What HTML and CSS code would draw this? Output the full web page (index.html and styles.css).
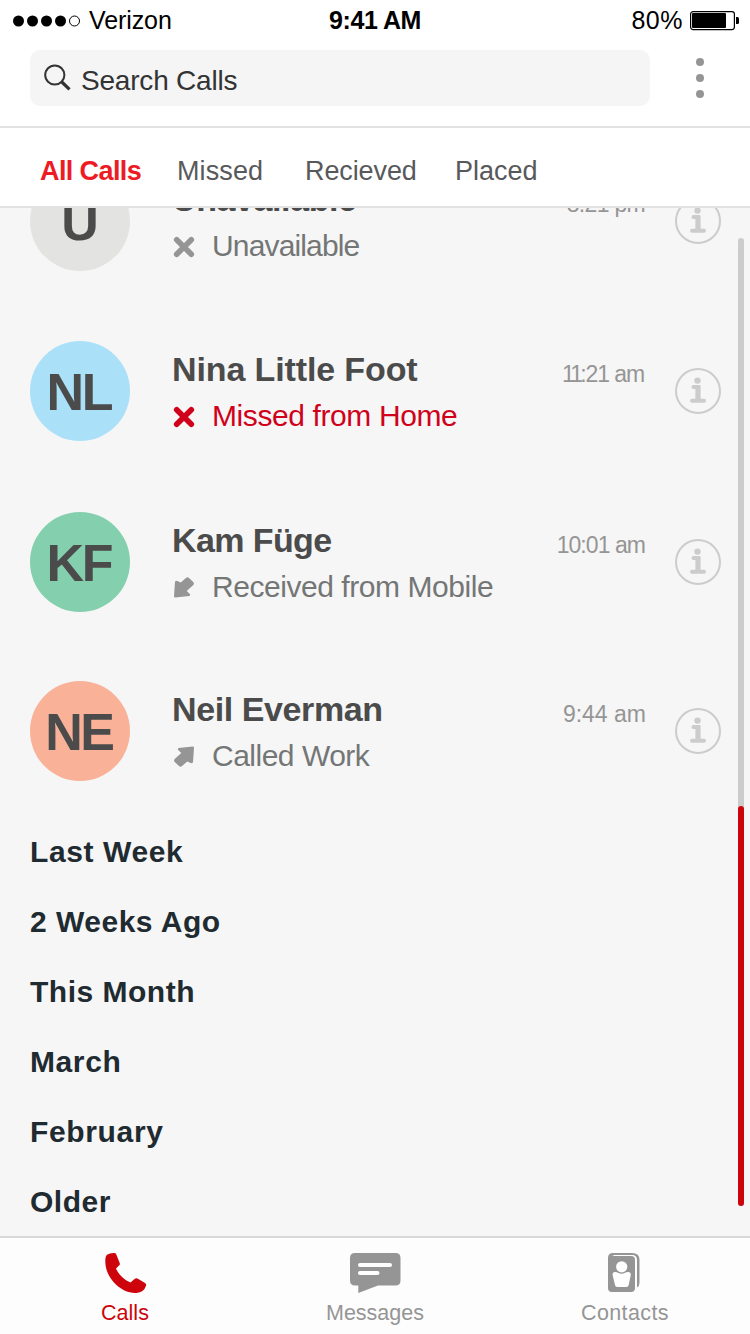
FILE: index.html
```html
<!DOCTYPE html>
<html lang="en">
<head>
<meta charset="utf-8">
<title>Calls</title>
<link rel="stylesheet" href="styles.css">
</head>
<body>
<svg class="defs" aria-hidden="true">
  <symbol id="info" viewBox="0 0 46 46"><circle cx="23" cy="23" r="22" fill="none" stroke="#ccc" stroke-width="2"/><circle cx="22.500" cy="12.600" r="3.200" fill="#ccc"/><path d="M18.500 18.900H23V32" fill="none" stroke="#ccc" stroke-width="4" stroke-linecap="round"/><path d="M23 17.500V32" stroke="#ccc" stroke-width="5.200"/><path d="M17 32.700H29" stroke="#ccc" stroke-width="4" stroke-linecap="round"/></symbol>
  <symbol id="cross" viewBox="0 0 22 22"><path d="M3.700 3.700l14.600 14.600M18.300 3.700l-14.600 14.600" fill="none" stroke="currentColor" stroke-width="5.600" stroke-linecap="round"/></symbol>
  <symbol id="arrow" viewBox="0 0 22 22"><path d="M2 4.800Q2.500 3.500 4.300 4L7.800 5.600L13.200 .700Q14.600 -.300 16 .900L20 4.800Q21.700 6.400 20.300 8L13.700 14L17 17.300Q17.500 18.500 16.300 19L2.200 20.500Q1 20.500 1 19.200Z" fill="currentColor"/></symbol>
</svg>
<div class="screen">
  <div class="status">
    <div class="carrier">
      <svg width="68" height="12" viewBox="0 0 68 12"><circle cx="5.500" cy="6" r="5.500"/><circle cx="19.500" cy="6" r="5.500"/><circle cx="33.500" cy="6" r="5.500"/><circle cx="47.500" cy="6" r="5.500"/><circle cx="61.500" cy="6" r="5" fill="#fff" stroke="#000"/></svg>
      <span class="carrier-name">Verizon</span>
    </div>
    <div class="clock">9:41 AM</div>
    <div class="battery">
      <span class="percent">80%</span>
      <svg width="50" height="20" viewBox="0 0 50 20"><rect x=".6" y=".6" width="43.800" height="18" rx="2.500" fill="#fff" stroke="#000" stroke-width="1.200"/><rect x="2" y="2" width="34" height="15" rx="1"/><path d="M46 6h1.500q1.500 0 1.500 1.500v4q0 1.500-1.500 1.500H46z"/></svg>
    </div>
  </div>
  <div class="search-row">
    <div class="search">
      <svg width="28" height="28" viewBox="0 0 28 28"><circle cx="10.800" cy="11" r="9.600" fill="none" stroke="#333" stroke-width="2"/><path d="M17.300 17.500l8.200 7.900" stroke="#333" stroke-width="3.200"/></svg>
      <span>Search Calls</span>
    </div>
    <svg class="more" width="8" height="40" viewBox="0 0 8 40"><g fill="#959595"><circle cx="4" cy="4" r="4"/><circle cx="4" cy="20" r="4"/><circle cx="4" cy="36" r="4"/></g></svg>
  </div>
  <nav class="filters">
    <span class="filter all">All Calls</span><span class="filter missed-tab">Missed</span><span class="filter received-tab">Recieved</span><span class="filter placed-tab">Placed</span>
  </nav>
  <main class="content">
    <div class="calls">
      <div class="call unavailable">
        <div class="avatar grey">U</div>
        <div class="details"><div class="name">Unavailable</div><div class="kind"><svg class="mark"><use href="#cross"/></svg><span>Unavailable</span></div></div>
        <time>8:21 pm</time><svg class="info"><use href="#info"/></svg>
      </div>
      <div class="call nina">
        <div class="avatar blue">NL</div>
        <div class="details"><div class="name">Nina Little Foot</div><div class="kind alert"><svg class="mark"><use href="#cross"/></svg><span>Missed from Home</span></div></div>
        <time><span class="ones">11</span>:21 am</time><svg class="info"><use href="#info"/></svg>
      </div>
      <div class="call kam">
        <div class="avatar green">KF</div>
        <div class="details"><div class="name">Kam Füge</div><div class="kind"><svg class="mark"><use href="#arrow"/></svg><span>Received from Mobile</span></div></div>
        <time>10:01 am</time><svg class="info"><use href="#info"/></svg>
      </div>
      <div class="call neil">
        <div class="avatar orange">NE</div>
        <div class="details"><div class="name">Neil Everman</div><div class="kind"><svg class="mark out"><use href="#arrow"/></svg><span>Called Work</span></div></div>
        <time>9:44 am</time><svg class="info"><use href="#info"/></svg>
      </div>
    </div>
    <div class="periods">
      <div class="last-week">Last Week</div><div class="weeks-ago">2 Weeks Ago</div><div class="this-month">This Month</div><div class="march">March</div><div class="february">February</div><div class="older">Older</div>
    </div>
    <div class="scrollbar"><div class="thumb"></div></div>
  </main>
  <footer class="tabbar">
    <div class="tab active">
      <svg width="52" height="42" viewBox="0 0 52 42"><path d="M8 2.700Q11 .800 15.300 1Q16.700 1 17.200 2.200L20.700 11Q21.200 12.600 20 13.500L17 16.500C19.500 22.500 25.500 28.300 31.500 30.500L35.500 27Q37 25.700 38.500 26.500L46 31Q47.500 32 47.100 33.600Q45 40.500 37.500 41C30 41.500 21 37.500 14.500 30C8.500 23 6.300 16 6.300 9Q6.300 4 8 2.700Z" fill="currentColor"/></svg>
      <span class="l-calls">Calls</span>
    </div>
    <div class="tab">
      <svg width="52" height="42" viewBox="0 0 52 42"><path d="M6 1H46.500Q51.500 1 51.500 6V28.500Q51.500 33.500 46.500 33.500H29L9.300 41V33.500H6Q1 33.500 1 28.500V6Q1 1 6 1Z" fill="currentColor"/><path d="M11 13H41M11 21H28.500" stroke="#fff" stroke-width="4" stroke-linecap="round"/></svg>
      <span class="l-messages">Messages</span>
    </div>
    <div class="tab">
      <svg class="book" width="52" height="42" viewBox="0 0 52 42"><rect x="10" y="4" width="27" height="36" rx="4" fill="currentColor"/><path d="M10 9V6Q10 1 15 1H34Q41.500 1 41.500 8V31Q41.500 34 39 35.500V8Q39 4 35.500 3H17Q14.200 3 14.200 5.200V9Z" fill="currentColor"/><circle cx="23.700" cy="14.800" r="5.600" fill="#fff"/><path d="M14.600 23Q14.400 20 17 20Q19 20 20 20.800Q23.500 22.800 27 20.800Q28 20 30 20Q33 20 32.800 23L30.700 33Q30.300 35 28.500 35H19.300Q17.300 35 17 33Z" fill="#fff"/></svg>
      <span class="l-contacts">Contacts</span>
    </div>
  </footer>
</div>
</body>
</html>
```
FILE: styles.css
```css
* { box-sizing: border-box; }
body { margin: 0; font-family: "Liberation Sans", Arial, sans-serif; background: #f6f6f6; }
svg { display: block; flex: none; }
.defs { display: none; }
.screen { width: 750px; height: 1334px; display: flex; flex-direction: column; overflow: hidden; }

.status { height: 40px; flex: none; background: #fff; color: #000; display: grid; grid-template-columns: 1fr 100px 1fr; font-size: 25px; line-height: 41px; }
.carrier { display: flex; align-items: center; gap: 8px; padding-left: 13px; }
.carrier-name { letter-spacing: -.1px; }
.clock { font-weight: bold; text-align: center; letter-spacing: -.45px; white-space: nowrap; }
.battery { display: flex; align-items: center; justify-content: flex-end; gap: 7px; padding-right: 10px; }
.percent { letter-spacing: .5px; }

.search-row { height: 88px; flex: none; background: #fff; border-bottom: 2px solid #e2e2e2; padding: 10px 46px 0 30px; display: flex; justify-content: space-between; }
.search { width: 620px; height: 56px; border-radius: 10px; background: #f5f5f5; padding-left: 14px; display: flex; gap: 9px; color: #333; font-size: 28px; line-height: 62px; letter-spacing: -.2px; }
.search svg { margin-top: 14px; }
.more { margin-top: 8px; }

.filters { height: 80px; flex: none; background: #fff; border-bottom: 2px solid #e2e2e2; padding-left: 40px; display: flex; font-size: 27px; line-height: 86px; color: #58595b; }
.all { width: 137px; font-weight: bold; color: #ed1c24; letter-spacing: -.6px; }
.missed-tab { width: 128px; letter-spacing: .1px; }
.received-tab { width: 150px; letter-spacing: -.1px; }
.placed-tab { letter-spacing: 0; }

.content { flex: 1; position: relative; overflow: hidden; }
.calls { margin-top: -37px; }
.call { display: flex; padding: 0 29px 0 30px; height: 171px; }
.unavailable { height: 170px; }
.kam { height: 169px; }
.neil { height: 136px; }
.avatar { width: 100px; height: 100px; border-radius: 50%; font-weight: bold; font-size: 52px; line-height: 103px; text-align: center; color: #4b4b4b; letter-spacing: -2.5px; text-indent: -2.5px; }
.grey { background: #e3e3e1; }
.blue { background: #aae0f8; }
.green { background: #83cfae; }
.orange { background: #f9b298; }
.details { margin-left: 42px; flex: 1; white-space: nowrap; }
.name { font-weight: bold; font-size: 34px; line-height: 40px; margin-top: 8px; color: #4b4b4b; letter-spacing: -.12px; }
.kind { font-size: 30px; line-height: 36px; height: 36px; margin-top: 9px; display: flex; gap: 17px; color: #747676; }
.mark { width: 22px; height: 22px; margin: 8px 0 0 1px; color: #959595; }
.out { transform: rotate(180deg); margin-top: 7px; }
.alert, .alert .mark { color: #d0021b; }
time { font-size: 23px; line-height: 28px; margin: 19px 29px 0 0; color: #959595; white-space: nowrap; }
.info { width: 46px; height: 46px; margin-top: 27px; }
.unavailable .name { letter-spacing: -.4px; }
.unavailable .kind { letter-spacing: -.85px; }
.unavailable time { letter-spacing: -.7px; margin-right: 30px; }
.nina .kind { letter-spacing: -.4px; }
.nina time { letter-spacing: -1.1px; margin-right: 31px; }
.ones { letter-spacing: -2.8px; }
.kam .name { letter-spacing: -.6px; }
.kam .kind { letter-spacing: -.45px; }
.kam time { letter-spacing: -.95px; margin-right: 30px; }
.neil .name { letter-spacing: -.4px; }
.neil .kind { letter-spacing: -.5px; }

.periods { padding-left: 30px; font-size: 30px; font-weight: bold; line-height: 70px; color: #1f2b31; }
.last-week { letter-spacing: .6px; }
.weeks-ago { letter-spacing: .5px; }
.this-month { letter-spacing: .5px; }
.march { letter-spacing: .6px; }
.february { letter-spacing: .65px; }
.older { letter-spacing: .5px; }

.scrollbar { position: absolute; right: 6px; top: 30px; width: 6px; height: 968px; border-radius: 3px; background: #ccc; display: flex; align-items: flex-end; }
.thumb { width: 6px; height: 400px; border-radius: 3px; background: #cd040b; }

.tabbar { height: 98px; flex: none; background: #fdfdfd; border-top: 2px solid #d8d8d8; display: grid; grid-template-columns: repeat(3, 1fr); }
.tab { display: flex; flex-direction: column; align-items: center; padding-top: 14px; gap: 7px; color: #959595; font-size: 21.5px; line-height: 24px; }
.active { color: #cd040b; }
.book { margin-left: -2px; }
.l-calls { letter-spacing: 0; }
.l-messages { letter-spacing: 0; }
.l-contacts { letter-spacing: .4px; }
```
